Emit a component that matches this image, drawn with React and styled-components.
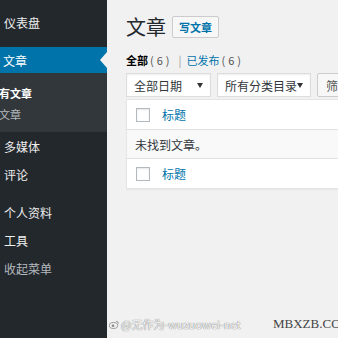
import React from 'react';
import styled, { createGlobalStyle } from 'styled-components';

const Global = createGlobalStyle`
  html, body { margin: 0; padding: 0; width: 338px; height: 338px; overflow: hidden; background: #f1f1f1; }
  body { font-family: "Noto Sans CJK SC", "Noto Sans", sans-serif; }
  * { box-sizing: border-box; }
`;

const Page = styled.div`
  display: flex;
  width: 338px;
  height: 338px;
  position: relative;
  overflow: hidden;
`;

const Sidebar = styled.nav`
  width: 107px;
  flex: none;
  background: #23282d;
  padding-top: 8px;
  overflow: hidden;
`;

const MenuItem = styled.div`
  position: relative;
  height: ${p => p.$h || 28}px;
  margin-top: ${p => p.$gap || 0}px;
  display: flex;
  align-items: center;
  padding-left: ${p => (p.$active ? 3 : 4)}px;
  font-size: 12px;
  white-space: nowrap;
  color: ${p => (p.$muted ? '#b4b9be' : p.$active ? '#fff' : '#eee')};
  background: ${p => (p.$active ? '#0073aa' : 'transparent')};
`;

const Arrow = styled.span`
  position: absolute;
  right: 0;
  top: 50%;
  margin-top: -8px;
  width: 0;
  height: 0;
  border-top: 8px solid transparent;
  border-bottom: 8px solid transparent;
  border-right: 7px solid #f1f1f1;
`;

const Submenu = styled.div`
  background: #32373c;
  padding: 9px 0 8px;
`;

const SubItem = styled.div`
  height: 21px;
  display: flex;
  align-items: center;
  margin-left: -12px;
  font-size: 11px;
  white-space: nowrap;
  color: ${p => (p.$current ? '#fff' : 'rgba(240,245,250,0.7)')};
  font-weight: ${p => (p.$current ? 700 : 400)};
`;

const Main = styled.main`
  flex: 1;
  min-width: 0;
  padding: 16px 0 0 19px;
`;

const Header = styled.div`
  display: flex;
  align-items: center;
  gap: 6px;
  height: 22px;
`;

const Title = styled.h1`
  margin: 0;
  font-size: 20px;
  font-weight: 400;
  line-height: 22px;
  color: #23282d;
`;

const AddNew = styled.a`
  height: 22px;
  width: 47px;
  display: flex;
  align-items: center;
  justify-content: center;
  border: 1px solid #ccc;
  border-radius: 2px;
  background: #f7f7f7;
  color: #0073aa;
  font-size: 11px;
  font-weight: 700;
`;

const SubSub = styled.div`
  margin-top: 13px;
  height: 18px;
  line-height: 18px;
  font-size: 11px;
  color: #555;
  white-space: nowrap;
`;

const Strong = styled.span`
  font-weight: 700;
  color: #000;
`;

const Link = styled.span`
  color: #0073aa;
`;

const Count = styled.span`
  color: #555;
  margin-left: 2px;
  letter-spacing: 3px;
`;

const Sep = styled.span`
  color: #999;
  margin: 0 5px 0 6px;
`;

const Filters = styled.div`
  margin-top: 4px;
  display: flex;
  gap: 6px;
  height: 24px;
  white-space: nowrap;
`;

const Select = styled.div`
  flex: none;
  width: ${p => p.$w}px;
  height: 24px;
  display: flex;
  align-items: center;
  justify-content: space-between;
  padding: 0 7px 0 7px;
  background: #fff;
  border: 1px solid #ddd;
  box-shadow: inset 0 1px 2px rgba(0, 0, 0, 0.07);
  font-size: 12px;
  color: #32373c;
`;

const FilterButton = styled.div`
  flex: none;
  height: 24px;
  padding: 0 8px;
  display: flex;
  align-items: center;
  background: #f7f7f7;
  border: 1px solid #ccc;
  border-radius: 2px;
  font-size: 12px;
  color: #555;
`;

const Table = styled.div`
  margin-top: 2px;
  width: 240px;
  background: #fff;
  border: 1px solid #e5e5e5;
  box-shadow: 0 1px 1px rgba(0, 0, 0, 0.04);
`;

const Row = styled.div`
  height: ${p => (p.$empty ? 30 : 29)}px;
  display: flex;
  align-items: center;
  gap: 12px;
  padding-left: ${p => (p.$empty ? 8 : 9)}px;
  font-size: 12px;
  color: ${p => (p.$empty ? '#32373c' : '#0073aa')};
  background: ${p => (p.$empty ? '#f9f9f9' : '#fff')};
  border-top: ${p => (p.$empty ? '1px solid #e1e1e1' : 'none')};
  border-bottom: ${p => (p.$empty ? '1px solid #e1e1e1' : 'none')};
`;

const Checkbox = styled.span`
  width: 14px;
  height: 14px;
  border: 1px solid #b4b9be;
  background: #fff;
  box-shadow: inset 0 1px 2px rgba(0, 0, 0, 0.1);
`;

const Watermark = styled.div`
  position: absolute;
  left: 109px;
  top: 316px;
  display: flex;
  align-items: center;
  gap: 2px;
  font-size: 11px;
  color: #f4f4f4;
  text-shadow: 0 0 1px #888, 0 0 1px #888;
  white-space: nowrap;
`;

const SiteMark = styled.div`
  position: absolute;
  left: 273px;
  top: 316px;
  font-family: "Liberation Serif", "DejaVu Serif", serif;
  font-size: 13px;
  color: #444;
  white-space: nowrap;
`;

const Caret = () => (
  <svg width="6" height="5" viewBox="0 0 6 5">
    <path d="M0 0h6L3 5z" fill="#333" />
  </svg>
);

const Weibo = () => (
  <svg width="10" height="9" viewBox="0 0 10 9">
    <ellipse cx="4.5" cy="5.5" rx="4.2" ry="3" fill="#eee" stroke="#888" strokeWidth="0.8" />
    <circle cx="4" cy="5.8" r="1.3" fill="#888" />
    <path d="M7 1.2a2.4 2.4 0 0 1 2.4 2.6" fill="none" stroke="#888" strokeWidth="0.8" />
  </svg>
);

export default function App() {
  return (
    <>
      <Global />
      <Page>
        <Sidebar>
          <MenuItem>仪表盘</MenuItem>
          <MenuItem $gap={11} $h={26} $active>
            文章
            <Arrow />
          </MenuItem>
          <Submenu>
            <SubItem $current>所有文章</SubItem>
            <SubItem>写文章</SubItem>
          </Submenu>
          <MenuItem>多媒体</MenuItem>
          <MenuItem>评论</MenuItem>
          <MenuItem $gap={10}>个人资料</MenuItem>
          <MenuItem>工具</MenuItem>
          <MenuItem $muted>收起菜单</MenuItem>
        </Sidebar>
        <Main>
          <Header>
            <Title>文章</Title>
            <AddNew>写文章</AddNew>
          </Header>
          <SubSub>
            <Strong>全部</Strong>
            <Count>(6)</Count>
            <Sep>|</Sep>
            <Link>已发布</Link>
            <Count>(6)</Count>
          </SubSub>
          <Filters>
            <Select $w={85}>
              全部日期
              <Caret />
            </Select>
            <Select $w={94}>
              所有分类目录
              <Caret />
            </Select>
            <FilterButton>筛选</FilterButton>
          </Filters>
          <Table>
            <Row>
              <Checkbox />
              标题
            </Row>
            <Row $empty>未找到文章。</Row>
            <Row>
              <Checkbox />
              标题
            </Row>
          </Table>
        </Main>
        <Watermark>
          <Weibo />
          @无作为-wuzuowei-net
        </Watermark>
        <SiteMark>MBXZB.CO</SiteMark>
      </Page>
    </>
  );
}
